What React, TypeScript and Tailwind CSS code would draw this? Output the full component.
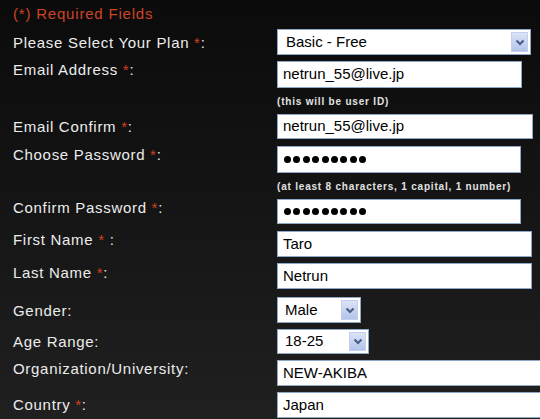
const Star = () => <span className="text-[#d2401f]">*</span>;

const Chevron = () => (
  <svg width="10" height="7" viewBox="0 0 10 7" className="block">
    <polyline points="1.5,1.5 5,5 8.5,1.5" fill="none" stroke="#4b5f86" strokeWidth="2.2" />
  </svg>
);

const Select = ({ value, className }: { value: string; className: string }) => (
  <div className={`flex h-full bg-white border border-[#8ea9c8] ${className}`}>
    <div className="flex-1 flex items-center pl-[7px] text-[15px] text-black">{value}</div>
    <div className="w-[17px] my-[2px] mr-[2px] flex items-center justify-center bg-gradient-to-b from-[#dbe4f6] to-[#b3c4ea] border border-[#c3cfec]">
      <Chevron />
    </div>
  </div>
);

const Field = ({ value, className }: { value: string; className: string }) => (
  <div className={`flex items-center h-full bg-white border border-[#8ea9c8] pl-[5px] text-[15px] text-black ${className}`}>
    {value}
  </div>
);

const Dots = ({ className }: { className: string }) => (
  <div className={`flex items-center gap-[2.4px] h-full bg-white border border-[#8ea9c8] pl-[6px] ${className}`}>
    {Array.from({ length: 9 }).map((_, i) => (
      <span key={i} className="block w-[7px] h-[7px] rounded-full bg-black" />
    ))}
  </div>
);

const Label = ({ children, className }: { children: React.ReactNode; className: string }) => (
  <div className={`w-[277px] shrink-0 pl-[13px] leading-[18px] text-[15px] tracking-[0.7px] text-[#ececec] ${className}`}>
    {children}
  </div>
);

const Hint = ({ children }: { children: React.ReactNode }) => (
  <div className="flex h-[26px] items-center">
    <div className="w-[277px] shrink-0" />
    <div className="text-[10px] font-bold tracking-[0.8px] text-[#e2e2e2]">{children}</div>
  </div>
);

export default function App() {
  return (
    <div className="w-[540px] h-[419px] overflow-hidden bg-gradient-to-b from-[#0b0b0b] via-[#151515] to-[#202020] font-['Liberation_Sans',Arial,sans-serif]">
      <div className="h-[29px] flex items-center pl-[13px] text-[15px] tracking-[0.8px] text-[#cc4426]">
        (*) Required Fields
      </div>

      <div className="flex h-[26px]">
        <Label className="pt-[5px]">Please Select Your Plan <Star />:</Label>
        <Select value="Basic - Free" className="w-[254px] pl-px" />
      </div>

      <div className="flex h-[27px] mt-[6px]">
        <Label className="pt-0">Email Address <Star />:</Label>
        <Field value="netrun_55@live.jp" className="w-[245px]" />
      </div>
      <Hint>(this will be user ID)</Hint>

      <div className="flex h-[25px]">
        <Label className="pt-[4px]">Email Confirm <Star />:</Label>
        <Field value="netrun_55@live.jp" className="w-[256px]" />
      </div>

      <div className="flex h-[27px] mt-[7px]">
        <Label className="pt-0">Choose Password <Star />:</Label>
        <Dots className="w-[244px]" />
      </div>
      <Hint>(at least 8 characters, 1 capital, 1 number)</Hint>

      <div className="flex h-[25px]">
        <Label className="pt-0">Confirm Password <Star />:</Label>
        <Dots className="w-[244px]" />
      </div>

      <div className="flex h-[26px] mt-[7px]">
        <Label className="pt-0">First Name <Star /> :</Label>
        <Field value="Taro" className="w-[255px]" />
      </div>

      <div className="flex h-[26px] mt-[6px]">
        <Label className="pt-px">Last Name <Star />:</Label>
        <Field value="Netrun" className="w-[255px]" />
      </div>

      <div className="flex h-[26px] mt-[8px]">
        <Label className="pt-[5px]">Gender:</Label>
        <Select value="Male" className="w-[84px]" />
      </div>

      <div className="flex h-[25px] mt-[6px]">
        <Label className="pt-[4px]">Age Range:</Label>
        <Select value="18-25" className="w-[92px]" />
      </div>

      <div className="flex h-[26px] mt-[6px]">
        <Label className="pt-0">Organization/University:</Label>
        <Field value="NEW-AKIBA" className="w-[290px] shrink-0" />
      </div>

      <div className="flex h-[26px] mt-[6px]">
        <Label className="pt-[4px]">Country <Star />:</Label>
        <Field value="Japan" className="w-[290px] shrink-0" />
      </div>
    </div>
  );
}
